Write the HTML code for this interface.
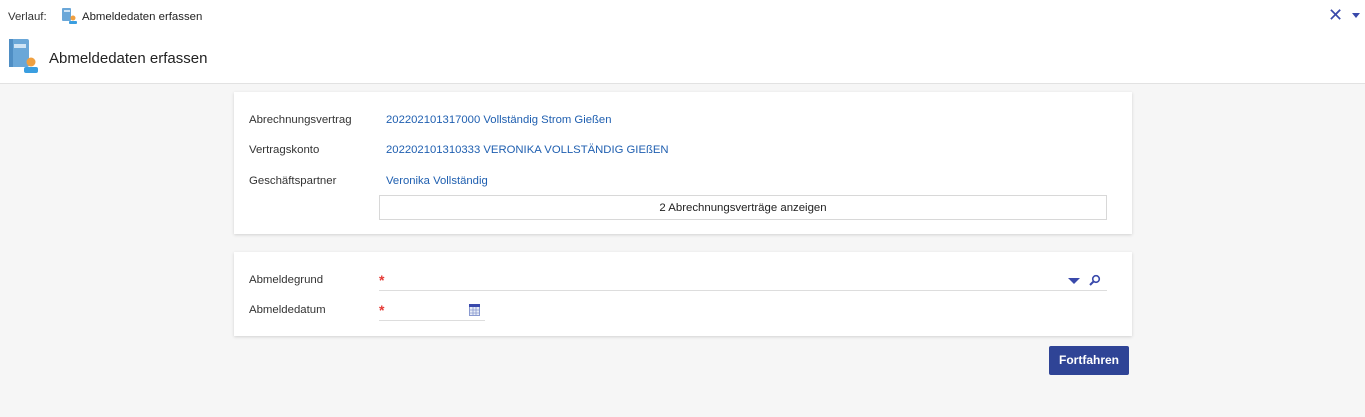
<!DOCTYPE html>
<html><head><style>
body{margin:0;width:1365px;height:417px;background:#f6f6f6;font-family:"Liberation Sans",sans-serif;position:relative;overflow:hidden;color:#333}
.top{position:absolute;left:0;top:0;width:1365px;height:83px;background:#fff;border-bottom:1px solid #e2e2e2}
.a{position:absolute;white-space:nowrap}
.card{position:absolute;left:234px;width:898px;background:#fff;box-shadow:0 1px 3px rgba(0,0,0,.15)}
.lbl{position:absolute;left:15px;font-size:11.4px;color:#333}
.val{position:absolute;left:152px;font-size:11.3px;color:#1f5fb0}
</style></head><body>
<div class="top">
<div class="a" style="left:8px;top:11px;font-size:11.4px;color:#333">Verlauf:</div>
<svg class="a" style="left:62px;top:8px" width="16" height="16"><rect x="0" y="0" width="9" height="13" rx="1" fill="#6aa7d8"/><rect x="2" y="2" width="6" height="2" fill="#cfe4f5"/><circle cx="11" cy="10" r="2.5" fill="#f0a040"/><rect x="7" y="13" width="8" height="3" rx="1" fill="#3a9ee0"/></svg>
<div class="a" style="left:82px;top:11px;font-size:11.4px;color:#222">Abmeldedaten erfassen</div>
<div class="a" style="left:1328px;top:5px;font-size:18px;color:#3949ab">✕</div>
<div class="a" style="left:1352px;top:13px;width:0;height:0;border-left:4px solid transparent;border-right:4px solid transparent;border-top:5px solid #3949ab"></div>
<svg class="a" style="left:9px;top:39px" width="30" height="34"><rect x="0" y="0" width="20" height="28" rx="2" fill="#6aa7d8"/><rect x="0" y="0" width="4" height="28" fill="#4f8ec4"/><rect x="5" y="5" width="12" height="4" fill="#cfe4f5"/><circle cx="22" cy="23" r="4.5" fill="#f0a040"/><rect x="15" y="28" width="14" height="6" rx="2" fill="#3a9ee0"/></svg>
<div class="a" style="left:49px;top:50px;font-size:15px;color:#222">Abmeldedaten erfassen</div>
</div>
<div class="card" style="top:92px;height:142px">
<div class="lbl" style="top:22px">Abrechnungsvertrag</div><div class="val" style="top:22px">202202101317000 Vollständig Strom Gießen</div>
<div class="lbl" style="top:52px">Vertragskonto</div><div class="val" style="top:52px">202202101310333 VERONIKA VOLLSTÄNDIG GIEßEN</div>
<div class="lbl" style="top:83px">Geschäftspartner</div><div class="val" style="top:83px">Veronika Vollständig</div>
<div class="a" style="left:145px;top:103px;width:726px;height:23px;border:1px solid #d8d8d8;text-align:center;line-height:25px;font-size:11.4px;color:#222">2 Abrechnungsverträge anzeigen</div>
</div>
<div class="card" style="top:252px;height:84px">
<div class="lbl" style="top:22px">Abmeldegrund</div>
<div class="a" style="left:145px;top:20px;color:#e53935;font-size:14px;font-weight:bold">*</div>
<div class="a" style="left:145px;top:38px;width:728px;border-top:1px solid #ddd"></div>
<div class="a" style="left:834px;top:26px;width:0;height:0;border-left:6px solid transparent;border-right:6px solid transparent;border-top:6px solid #3949ab"></div>
<svg class="a" style="left:855px;top:22px" width="12" height="12"><circle cx="7" cy="5" r="3.3" fill="none" stroke="#3949ab" stroke-width="1.6"/><line x1="5" y1="7" x2="1" y2="11" stroke="#3949ab" stroke-width="2"/></svg>
<div class="lbl" style="top:52px">Abmeldedatum</div>
<div class="a" style="left:145px;top:50px;color:#e53935;font-size:14px;font-weight:bold">*</div>
<div class="a" style="left:145px;top:68px;width:106px;border-top:1px solid #ddd"></div>
<svg class="a" style="left:235px;top:52px" width="11" height="12"><rect x="0.5" y="0.5" width="10" height="11" fill="#e8edf7" stroke="#8a9ad0"/><rect x="0" y="0" width="11" height="3" fill="#3949ab"/><path d="M0 6h11M0 9h11M4 3v9M7 3v9" stroke="#8a9ad0" stroke-width=".8"/></svg>
</div>
<div class="a" style="left:1049px;top:346px;width:80px;height:29px;background:#2f4496;color:#fff;font-size:12px;font-weight:bold;text-align:center;line-height:29px;border-radius:2px">Fortfahren</div>
</body></html>
